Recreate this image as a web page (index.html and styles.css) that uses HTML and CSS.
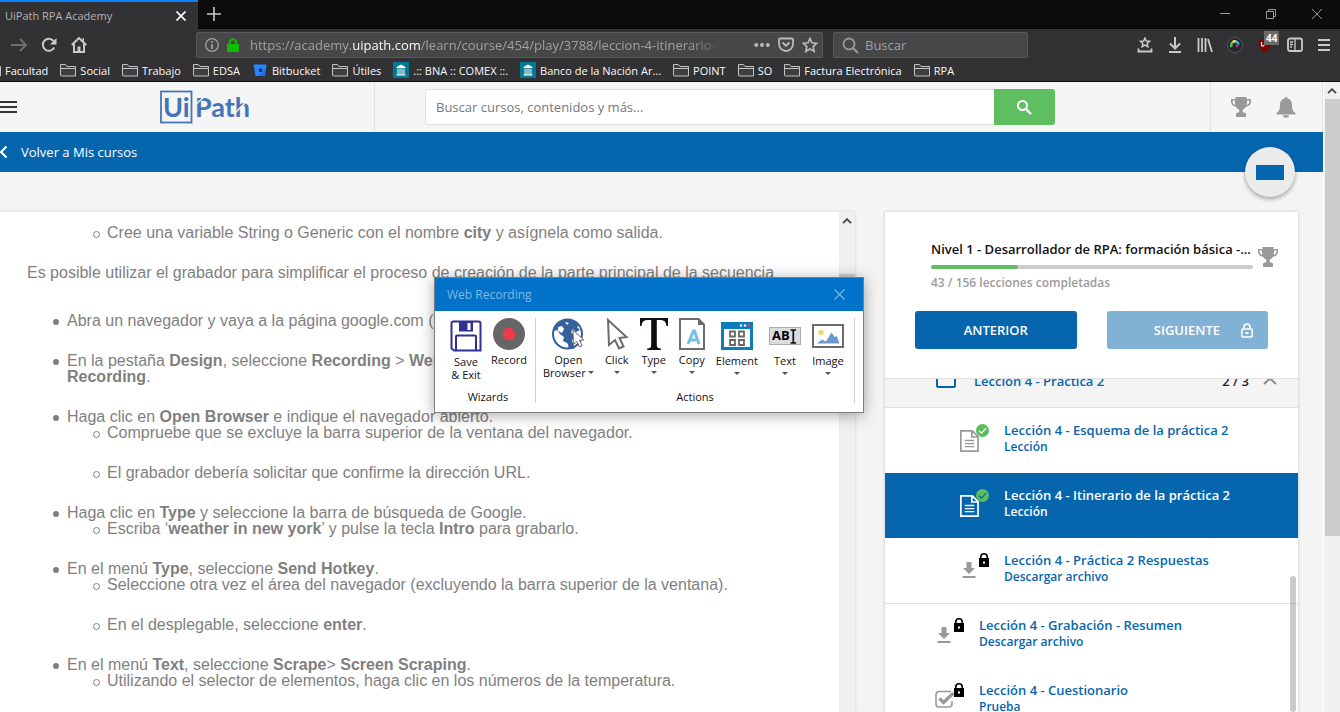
FILE: index.html
```html
<!DOCTYPE html>
<html lang="es">
<head>
<meta charset="utf-8">
<title>UiPath RPA Academy</title>
<link rel="stylesheet" href="styles.css">
</head>
<body>
<svg class="defs" aria-hidden="true">
  <symbol id="folder" viewBox="0 0 16 16"><path d="M.5 13V2.5h5l1.500 2h8.500V14H1.500a1 1 0 0 1-1-1z" fill="#3f3f41" stroke="#c3c3c4"/><path d="M.5 6.500h15" stroke="#c3c3c4"/></symbol>
  <symbol id="bank" viewBox="0 0 16 16"><path fill="#037893" d="M0 0h16v16H0z"/><path fill="#fff" d="M8 2.500 3.500 5v1h9V5zM4.500 6.500h1V11h-1zM6.500 6.500h1V11h-1zM8.500 6.500h1V11h-1zM10.500 6.500h1V11h-1zM4 11.500h8v.7H4zM3.500 12.600h9v.9h-9z"/></symbol>
  <symbol id="trophy" viewBox="0 0 22 20"><path fill="#999" d="M5.500 0h11v2H21v2.500c0 3-2.300 5-5 5.300-.8 1.500-2 2.400-3.200 2.800v2.600c2.200.3 3.200 1 3.200 2V20H6v-2.800c0-1 1-1.700 3.200-2v-2.600C8 12.200 6.800 11.300 6 9.800 3.300 9.500 1 7.500 1 4.500V2h4.500zM2.600 3.500v1c0 1.700 1 3 2.700 3.500-.3-1.200-.4-2.800-.4-4.500zm14.500 0c0 1.700-.1 3.300-.4 4.500 1.700-.5 2.700-1.800 2.700-3.500v-1z"/></symbol>
  <symbol id="doc" viewBox="0 0 20 23"><path fill="none" stroke="currentColor" stroke-width="1.800" d="M.9.9H13l6 6v15.200H.9zM12.500.8v6.500H19"/><path stroke="currentColor" stroke-width="1.400" d="M5 11h10M5 14.200h10M5 17.400h10"/></symbol>
  <symbol id="check" viewBox="0 0 12 12"><circle cx="6" cy="6" r="6" fill="#5cbd5f"/><path d="m2.800 6.200 2.300 2.200 4.200-4.600" fill="none" stroke="currentColor" stroke-width="1.200"/></symbol>
  <symbol id="lock" viewBox="0 0 12 14"><path d="M1 5h1V4a4 4 0 0 1 8 0v1h1v9H1zM3.600 5h4.800V4a2.400 2.400 0 0 0-4.800 0z" fill="#000" fill-rule="evenodd"/><path d="M5 8.500h2v2H5z" fill="#fff"/></symbol>
  <symbol id="down" viewBox="0 0 14 16"><path fill="#999" d="M4.500 0h5v6H13l-6 6-6-6h3.500zM.5 14h13v2H.5z"/></symbol>
  <symbol id="quiz" viewBox="0 0 20 18"><path d="M16 1.500H4A3 3 0 0 0 1 4.500V14a3 3 0 0 0 3 3h10a3 3 0 0 0 3-3v-3" fill="none" stroke="#999" stroke-width="1.600"/><path d="m4.500 8.500 4 4L18.500 3" fill="none" stroke="#999" stroke-width="3.400"/></symbol>
  <symbol id="up" viewBox="0 0 10 6"><path d="M1 5.200 5 1.200l4 4" fill="none" stroke="#444" stroke-width="1.800"/></symbol>
</svg>

<header class="chrome">
  <div class="titlebar">
    <div class="tab"><span>UiPath RPA Academy</span>
      <button class="plain" aria-label="Cerrar pestaña"><svg width="10" height="10"><path d="m.5.5 9 9m0-9-9 9" stroke="#f4f4f4" stroke-width="1.800"/></svg></button>
    </div>
    <button class="plain newtab" aria-label="Nueva pestaña"><svg width="14" height="14"><path d="M7 0v14M0 7h14" stroke="#c8c8c8" stroke-width="1.600"/></svg></button>
    <div class="winbtns">
      <button class="plain" aria-label="Minimizar"><svg width="10" height="10"><path d="M0 4.500h10" stroke="#999"/></svg></button>
      <button class="plain" aria-label="Restaurar"><svg width="10" height="10"><path d="M.5 2.500h7v7h-7zM2.500 2V.5h7v7H8" fill="none" stroke="#999"/></svg></button>
      <button class="plain" aria-label="Cerrar"><svg width="10" height="10"><path d="m0 0 10 10m0-10L0 10" stroke="#999"/></svg></button>
    </div>
  </div>
  <div class="toolbar">
    <div class="navbtns">
      <button class="plain" aria-label="Adelante"><svg width="16" height="16"><path d="M0 8h15M9 2l6 6-6 6" fill="none" stroke="#707072" stroke-width="1.800"/></svg></button>
      <button class="plain" aria-label="Recargar"><svg width="16" height="16"><path d="M13.200 10.500A6 6 0 1 1 12.500 4" fill="none" stroke="#c9c9ca" stroke-width="2"/><path d="M15.500 1v6.500H9z" fill="#c9c9ca"/></svg></button>
      <button class="plain" aria-label="Inicio"><svg width="16" height="16"><path d="M.8 8 8 1l7.200 7M3 7v8h10V7" fill="none" stroke="#c9c9ca" stroke-width="2"/><path d="M6.500 9.500h3V15h-3zM11.500 1H13v4h-1.500z" fill="#c9c9ca"/></svg></button>
    </div>
    <div class="urlbar">
      <svg width="14" height="14"><circle cx="7" cy="7" r="6.300" fill="none" stroke="#a5a5a6" stroke-width="1.200"/><path d="M6.200 6h1.600v5H6.200zM6.200 3h1.600v1.700H6.200z" fill="#a5a5a6"/></svg>
      <svg width="12" height="14"><path d="M2.800 7V4.500a3.200 3.200 0 0 1 6.400 0V7" fill="none" stroke="#12bc00" stroke-width="2"/><rect y="6" width="12" height="8" rx="1" fill="#12bc00"/></svg>
      <div class="url">https://academy.<b>uipath.com</b>/learn/course/454/play/3788/leccion-4-itinerario-de</div>
      <button class="plain" aria-label="Acciones"><svg width="16" height="16"><g fill="#b9b9ba"><circle cx="2.200" cy="8" r="2"/><circle cx="8" cy="8" r="2"/><circle cx="13.800" cy="8" r="2"/></g></svg></button>
      <button class="plain" aria-label="Pocket"><svg width="16" height="16"><path d="M2 1.500h12a1 1 0 0 1 1 1V7A7 7 0 0 1 1 7V2.500a1 1 0 0 1 1-1z" fill="none" stroke="#b9b9ba" stroke-width="1.800"/><path d="m4.500 5.500 3.500 3.300 3.500-3.300" fill="none" stroke="#b9b9ba" stroke-width="2"/></svg></button>
      <button class="plain" aria-label="Marcador"><svg width="16" height="16"><path d="m8 1.500 2 4.300 4.700.6-3.500 3.200.9 4.700L8 12l-4.100 2.300.9-4.700L1.300 6.400 6 5.800z" fill="none" stroke="#b9b9ba" stroke-width="1.700"/></svg></button>
    </div>
    <label class="websearch">
      <svg width="17" height="17"><circle cx="7" cy="7" r="5.500" fill="none" stroke="#98989a" stroke-width="1.800"/><path d="m11 11 5 5" stroke="#98989a" stroke-width="2.200"/></svg>
      <input type="text" placeholder="Buscar" aria-label="Buscar">
    </label>
    <div class="tools">
      <button class="plain" aria-label="Marcadores"><svg width="16" height="16"><path d="m8 1 1.300 3 3.200.3-2.400 2.200.7 3.200L8 8.100 5.200 9.700l.7-3.200-2.400-2.200L6.700 4z" fill="none" stroke="#c9c9ca" stroke-width="1.500"/><path d="M1.500 11.500v3h13v-3" fill="none" stroke="#c9c9ca" stroke-width="1.800"/></svg></button>
      <button class="plain" aria-label="Descargas"><svg width="16" height="16"><path d="M8 0v11M3 6.500l5 5 5-5M2 15h12" fill="none" stroke="#c9c9ca" stroke-width="2"/></svg></button>
      <button class="plain" aria-label="Biblioteca"><svg width="16" height="16"><path d="M1.500 1v14M5 1v14M8.500 1v14M11 2l4 13" fill="none" stroke="#c9c9ca" stroke-width="1.800"/></svg></button>
      <button class="plain" aria-label="Cámara"><svg width="16" height="16"><circle cx="8" cy="8" r="7.500" fill="#26272c" stroke="#55575e"/><path d="M4.800 10A3.600 3.600 0 0 1 5.500 5.300" fill="none" stroke="#3fd43f" stroke-width="2.400"/><path d="M5.500 5.300A3.600 3.600 0 0 1 9 4.500" fill="none" stroke="#f2e23a" stroke-width="2.400"/><path d="M9 4.500A3.600 3.600 0 0 1 11.500 7.500" fill="none" stroke="#36b6ee" stroke-width="2.400"/><path d="m9 9.500 2.300-1.500" stroke="#e02e8a" stroke-width="2"/></svg></button>
      <button class="plain ublock" aria-label="uBlock"><svg width="16" height="16"><path d="M8 1c2 1.300 4 2 6.500 2 0 6-1 9.500-6.500 12.500C2.500 12.500 1.500 9 1.500 3 4 3 6 2.300 8 1z" fill="#800000"/><path d="M4.500 5v3c0 1.500 2.500 1.500 2.500 0" fill="none" stroke="#fff" stroke-width="1.200"/></svg><span class="badge">44</span></button>
      <button class="plain" aria-label="Barra lateral"><svg width="16" height="16"><rect x="1" y="1.500" width="14" height="12.500" rx="2" fill="none" stroke="#c9c9ca" stroke-width="1.800"/><path d="M8 1.500V14M3 5h3M3 7.500h3M3 10h2" stroke="#c9c9ca" stroke-width="1.300"/></svg></button>
      <button class="plain" aria-label="Menú"><svg width="14" height="16"><path d="M1 3h12M1 8h12M1 13h12" stroke="#c9c9ca" stroke-width="1.800"/></svg></button>
    </div>
  </div>
  <nav class="bookmarks">
    <a href="#"><svg><use href="#folder"/></svg>Facultad</a>
    <a href="#"><svg><use href="#folder"/></svg>Social</a>
    <a href="#"><svg><use href="#folder"/></svg>Trabajo</a>
    <a href="#"><svg><use href="#folder"/></svg>EDSA</a>
    <a href="#"><svg viewBox="0 0 16 16"><path d="M1.500 2.500h13L13 14H3.500z" fill="#2684ff"/><path d="M10.500 6.500h-4l.7 3.500h2.800z" fill="#103a78"/><path d="m10 10 3.800-3L13 14H6z" fill="#1763d8" opacity=".6"/></svg>Bitbucket</a>
    <a href="#"><svg><use href="#folder"/></svg>Útiles</a>
    <a href="#"><svg><use href="#bank"/></svg>.:: BNA :: COMEX ::.</a>
    <a href="#"><svg><use href="#bank"/></svg>Banco de la Nación Ar...</a>
    <a href="#"><svg><use href="#folder"/></svg>POINT</a>
    <a href="#"><svg><use href="#folder"/></svg>SO</a>
    <a href="#"><svg><use href="#folder"/></svg>Factura Electrónica</a>
    <a href="#"><svg><use href="#folder"/></svg>RPA</a>
  </nav>
</header>

<div class="viewport">
  <div class="page">
    <header class="sitebar">
      <div class="brand">
        <button class="plain" aria-label="Menú"><svg width="17" height="14"><path d="M0 2h17M0 7h17M0 12h17" stroke="#333" stroke-width="2"/></svg></button>
        <svg class="logo" width="92" height="34" role="img" aria-label="UiPath">
          <rect x="1" y="1.500" width="30.500" height="31" fill="none" stroke="#4674b9" stroke-width="1.800"/>
          <text x="3" y="27">Ui</text><text x="35" y="27">Path</text>
          <path d="m34 16 11-10M76 22l9-9" stroke="#f5f5f5" stroke-width="1.500"/>
        </svg>
      </div>
      <form class="search">
        <input type="text" placeholder="Buscar cursos, contenidos y más..." aria-label="Buscar cursos">
        <button type="button" aria-label="Buscar"><svg width="17" height="17"><circle cx="6.500" cy="6.500" r="4.500" fill="none" stroke="#fff" stroke-width="2"/><path d="m10 10 5 5" stroke="#fff" stroke-width="2.400"/></svg></button>
      </form>
      <div class="account">
        <button class="plain" aria-label="Logros"><svg width="22" height="20"><use href="#trophy"/></svg></button>
        <button class="plain" aria-label="Avisos"><svg width="20" height="21"><path d="M10 0c1 0 1.500.6 1.500 1.500C15 2.500 16 5 16 8c0 4.500 1.200 6.500 3.500 8v1.500H.5V16C2.800 14.500 4 12.500 4 8c0-3 1-5.500 4.500-6.500C8.500.6 9 0 10 0zM7 18.300h6a3 2.500 0 0 1-6 0z" fill="#999"/></svg></button>
      </div>
    </header>
    <nav class="backbar">
      <a href="#"><svg width="8" height="14"><path d="M6.500 1.500 1 7l5.500 5.500" fill="none" stroke="#fff" stroke-width="2.200"/></svg>Volver a Mis cursos</a>
      <button class="bubble" aria-label="Panel"><span></span></button>
    </nav>
    <div class="columns">
      <main class="lesson">
        <article>
          <ul><li class="bare"><ul><li>Cree una variable String o Generic con el nombre <b>city</b> y asígnela como salida.</li></ul></li></ul>
          <p>Es posible utilizar el grabador para simplificar el proceso de creación de la parte principal de la secuencia</p>
          <ul>
            <li>Abra un navegador y vaya a la página google.com (</li>
            <li>En la pestaña <b>Design</b>, seleccione <b>Recording</b> &gt; <b>Web<br>Recording</b>.</li>
            <li>Haga clic en <b>Open Browser</b> e indique el navegador abierto.
              <ul><li>Compruebe que se excluye la barra superior de la ventana del navegador.</li><li>El grabador debería solicitar que confirme la dirección URL.</li></ul></li>
            <li>Haga clic en <b>Type</b> y seleccione la barra de búsqueda de Google.
              <ul><li>Escriba ‘<b>weather in new york</b>’ y pulse la tecla <b>Intro</b> para grabarlo.</li></ul></li>
            <li>En el menú <b>Type</b>, seleccione <b>Send Hotkey</b>.
              <ul><li>Seleccione otra vez el área del navegador (excluyendo la barra superior de la ventana).</li><li>En el desplegable, seleccione <b>enter</b>.</li></ul></li>
            <li>En el menú <b>Text</b>, seleccione <b>Scrape</b>&gt; <b>Screen Scraping</b>.
              <ul><li>Utilizando el selector de elementos, haga clic en los números de la temperatura.</li></ul></li>
          </ul>
        </article>
        <div class="scroll inner"><svg width="10" height="6"><use href="#up"/></svg><span></span></div>
      </main>
      <aside class="course">
        <section class="summary">
          <div class="progress">
            <div class="info">
              <h2>Nivel 1 - Desarrollador de RPA: formación básica -...</h2>
              <div class="bar"><div style="width:27%"></div></div>
              <small>43 / 156 lecciones completadas</small>
            </div>
            <svg width="22" height="20"><use href="#trophy"/></svg>
          </div>
          <div class="steps">
            <button>ANTERIOR</button>
            <button class="off">SIGUIENTE<svg width="12" height="15"><path d="M3 6V4a3 3 0 0 1 6 0v2" fill="none" stroke="#fff" stroke-width="1.600"/><rect x=".8" y="6" width="10.400" height="8" rx="1" fill="none" stroke="#fff" stroke-width="1.600"/><path d="M4.500 9h3v2h-3z" fill="#fff"/></svg></button>
          </div>
        </section>
        <div class="list">
          <div class="group">
            <svg width="20" height="14"><rect x="1" y="1" width="18" height="12" rx="1" fill="none" stroke="#0566ae" stroke-width="2"/></svg>
            <b>Lección 4 - Práctica 2</b><span>2 / 3</span>
            <svg width="14" height="8"><path d="m1 7 6-5.500L13 7" fill="none" stroke="#8a8a8a" stroke-width="2"/></svg>
          </div>
          <a class="item sub" href="#"><span class="kind"><svg width="19" height="22"><use href="#doc"/></svg><svg class="mark" width="13" height="13"><use href="#check"/></svg></span><span><b>Lección 4 - Esquema de la práctica 2</b><small>Lección</small></span></a>
          <a class="item sub current" href="#"><span class="kind"><svg width="19" height="22"><use href="#doc"/></svg><svg class="mark" width="13" height="13"><use href="#check"/></svg></span><span><b>Lección 4 - Itinerario de la práctica 2</b><small>Lección</small></span></a>
          <a class="item sub" href="#"><span class="kind"><svg width="14" height="16"><use href="#down"/></svg><svg class="mark" width="12" height="14"><use href="#lock"/></svg></span><span><b>Lección 4 - Práctica 2 Respuestas</b><small>Descargar archivo</small></span></a>
          <a class="item top" href="#"><span class="kind"><svg width="14" height="16"><use href="#down"/></svg><svg class="mark" width="12" height="14"><use href="#lock"/></svg></span><span><b>Lección 4 - Grabación - Resumen</b><small>Descargar archivo</small></span></a>
          <a class="item" href="#"><span class="kind"><svg width="20" height="18"><use href="#quiz"/></svg><svg class="mark" width="12" height="14"><use href="#lock"/></svg></span><span><b>Lección 4 - Cuestionario</b><small>Prueba</small></span></a>
          <div class="thumb"></div>
        </div>
      </aside>
    </div>
  </div>
  <div class="scroll outer"><svg width="10" height="6"><use href="#up"/></svg><span></span></div>
</div>

<section class="dialog" role="dialog" aria-label="Web Recording">
  <div class="caption"><span>Web Recording</span><button class="plain" aria-label="Cerrar"><svg width="11" height="11"><path d="m.5.5 10 10m0-10-10 10" stroke="#7fb9e3" stroke-width="1.100"/></svg></button></div>
  <div class="ribbon">
    <div class="block wizards">
      <div class="cmds">
        <button class="plain low"><svg width="32" height="32"><path d="M1.500 4A2 2 0 0 1 3.500 1.500H28.500A2 2 0 0 1 30.500 3.500V30.500H4L1.500 28.500zM6 30V16.500a1 1 0 0 1 1-1h18a1 1 0 0 1 1 1V30" fill="none" stroke="#2e3192" stroke-width="2"/><path d="M9 1h14v10.500H9z" fill="#2e3192"/><path d="M17.500 3h3v7h-3z" fill="#fff"/></svg>Save<br>&amp; Exit</button>
        <button class="plain"><svg width="32" height="32"><circle cx="16" cy="16" r="16" fill="#666"/><circle cx="16" cy="16" r="6.200" fill="#f03a52"/></svg>Record</button>
      </div>
      <div class="name">Wizards</div>
    </div>
    <div class="block actions">
      <div class="cmds">
        <button class="plain"><svg width="32" height="32"><circle cx="15.500" cy="16" r="14.500" fill="#fff" stroke="#365f9e" stroke-width="2"/><path d="M3 9C6 4 11 1 17 1.500c4 .3 8 2 10.500 5.500L25 9l3 3-4 2-3-3-2 3 3 4-2 5 3 7c-2 1-5 1.300-7 1 1-3 0-5-1-6l-4-2 1-4-4-3-3-4-3 1z" fill="#365f9e"/><path d="m6 9 4-1 2 3-2 4-4-2zM13 4l4 1-2 2z" fill="#fff"/><path d="m21 12 .4 14.500 3.400-3 2.800 5.500 2.600-1.300-2.700-5.400 4.400-.3z" fill="#fff" stroke="#666"/></svg>Open<br><span>Browser<i></i></span></button>
        <button class="plain"><svg width="24" height="32"><path d="m3 2 1 25 6-5 4 8.500 4.500-2L14.500 20l7-1z" fill="#fff" stroke="#6c6c6c" stroke-width="2"/></svg>Click<i></i></button>
        <button class="plain"><svg width="28" height="32"><path d="M0 0h28v8h-1.500C26 3.500 24 2 19.500 2h-2.700v25c0 2.500 1 3.400 4 3.500V32H7.200v-1.500c3-.1 4-1 4-3.500V2H8.500C4 2 2 3.500 1.500 8H0z" fill="#0a0f0f"/></svg>Type<i></i></button>
        <button class="plain"><svg width="26" height="32"><path d="M1 1h18.500L25 6.500V31H1z" fill="#fff" stroke="#6c6c6c" stroke-width="2"/><path d="M19 0v7h7z" fill="#6c6c6c"/><path d="m9 26 5.500-13h1L20 26M10.500 22h8" fill="none" stroke="#79bfe6" stroke-width="3"/></svg>Copy<i></i></button>
        <button class="plain low"><svg width="32" height="28"><path d="M0 0h32v28H0z" fill="#0a7dbd"/><path d="M3 7h26v18H3z" fill="#fff"/><path d="M9 9.500h5v5H9zM18 9.500h5v5h-5zM9 18h5v5H9zM18 18h5v5h-5z" fill="#fff" stroke="#666" stroke-width="1.800"/><g fill="#fff"><circle cx="20" cy="3.500" r="1.200"/><circle cx="24" cy="3.500" r="1.200"/></g><circle cx="28" cy="3.500" r="1.400" fill="#f03a52"/></svg>Element<i></i></button>
        <button class="plain low"><svg width="32" height="28"><rect x=".5" y="5.500" width="31" height="17" fill="#dcdcdc" stroke="#aaa"/><text x="3" y="18" class="abi">AB</text><path d="M21.500 8h2l.8 1 .8-1h2M24.300 9v11M21.500 21h2l.8-1 .8 1h2" fill="none" stroke="#111" stroke-width="1.700"/></svg>Text<i></i></button>
        <button class="plain low"><svg width="32" height="28"><path d="M1 3h30v22H1z" fill="#fff" stroke="#6c6c6c" stroke-width="2"/><circle cx="9" cy="10.500" r="2.700" fill="#efd775"/><path d="m5 21.500 5-4 4 2 5.500-9 3.500 5 1.500-2L27.500 21.500z" fill="#6c97cf"/></svg>Image<i></i></button>
      </div>
      <div class="name">Actions</div>
    </div>
  </div>
</section>
</body>
</html>
```
FILE: styles.css
```css
*, *::before { box-sizing: border-box; }
body {
  margin: 0;
  height: 100vh;
  overflow: hidden;
  display: flex;
  flex-direction: column;
  font-family: "Open Sans", "Noto Sans", sans-serif;
  font-size: 13px;
  background: #f4f4f4;
}
button, input { font: inherit; color: inherit; }
a { color: inherit; text-decoration: none; }
svg { flex: none; display: block; }
.defs { position: absolute; width: 0; height: 0; }
.plain { border: 0; padding: 0; background: none; display: flex; align-items: center; }

/* Browser frame */
.chrome { flex: none; background: #323234; color: #f9f9fa; border-bottom: 1px solid #0c0c0d; }
.titlebar { height: 29px; display: flex; background: #0c0c0c; border-bottom: 1px solid #000; }
.tab {
  width: 198px;
  height: 29px;
  padding: 0 12px 0 5px;
  display: flex;
  align-items: center;
  justify-content: space-between;
  background: #323234;
  border-top: 2px solid #0a84ff;
  font-size: 11px;
  color: #b4b4b5;
}
.newtab { margin-left: 9px; }
.winbtns { margin-left: auto; display: flex; gap: 36px; padding-right: 18px; }
.toolbar { height: 32px; display: flex; align-items: center; padding-right: 9px; }
.navbtns { width: 196px; padding-left: 11px; display: flex; gap: 14px; }
.urlbar {
  flex: 1;
  max-width: 627px;
  height: 26px;
  padding: 0 4px 0 8px;
  display: flex;
  align-items: center;
  gap: 8px;
  background: #474749;
  border: 1px solid #59595b;
  border-radius: 2px;
}
.url {
  flex: 1;
  margin-left: 3px;
  margin-right: 24px;
  overflow: hidden;
  white-space: nowrap;
  color: #a0a0a1;
  mask-image: linear-gradient(to right, #000 93%, transparent);
}
.url b { font-weight: 400; color: #f9f9fa; }
.websearch {
  width: 195px;
  height: 26px;
  margin-left: 10px;
  padding-left: 8px;
  display: flex;
  align-items: center;
  gap: 4px;
  background: #474749;
  border: 1px solid #59595b;
  border-radius: 2px;
}
.websearch input { width: 100%; border: 0; background: none; }
.websearch input::placeholder { color: #a0a0a1; }
.tools { margin-left: auto; display: flex; gap: 14px; }
.ublock { position: relative; }
.badge {
  position: absolute;
  left: 7px;
  top: -6px;
  padding: 0 2px;
  background: #6b6b6d;
  color: #fff;
  font-size: 10px;
  font-weight: 700;
  line-height: 14px;
}
.bookmarks { height: 20px; display: flex; align-items: center; gap: 12px; padding-bottom: 2px; font-size: 11px; white-space: nowrap; }
.bookmarks a { display: flex; align-items: center; gap: 4px; }
.bookmarks a:first-child { margin-left: -15px; }
.bookmarks svg { width: 16px; height: 16px; }

/* Web page */
.viewport { flex: 1; min-height: 0; display: flex; }
.page { flex: 1; min-width: 0; display: flex; flex-direction: column; }
.sitebar { flex: none; height: 50px; display: flex; align-items: center; background: #f5f5f5; border-right: 1px solid #e2e2e2; }
.brand { width: 375px; height: 100%; display: flex; align-items: center; gap: 143px; border-right: 1px solid #e2e2e2; }
.logo text { font: 700 27px Lato, sans-serif; fill: #4674b9; }
.search { flex: 1; max-width: 630px; margin-left: 50px; height: 36px; display: flex; }
.search input { flex: 1; min-width: 0; padding: 0 10px; border: 1px solid #e2e2e2; border-right: 0; border-radius: 3px 0 0 3px; background: #fff; }
.search input::placeholder { color: #777; }
.search button { width: 61px; padding: 0 0 0 22px; border: 0; border-radius: 0 3px 3px 0; background: #5fbe5f; }
.account { margin-left: auto; width: 112px; height: 100%; padding-left: 19px; display: flex; align-items: center; gap: 24px; border-left: 1px solid #e2e2e2; }
.backbar { flex: none; height: 40px; position: relative; display: flex; align-items: center; background: #0566ae; color: #fff; }
.backbar a { display: flex; align-items: center; gap: 13px; }
.bubble {
  position: absolute;
  right: 28px;
  top: 15px;
  width: 50px;
  height: 50px;
  border: 0;
  border-radius: 50%;
  padding: 0;
  background: #ebebeb;
  box-shadow: 0 2px 4px rgba(0, 0, 0, .35);
}
.bubble span { display: block; width: 28px; height: 15px; margin: 1px auto 0; background: #0566ae; }
.columns { flex: 1; min-height: 0; display: flex; gap: 30px; padding: 40px 25px 0 0; }
.lesson { flex: 1; min-width: 0; display: flex; background: #fff; box-shadow: 0 0 3px rgba(0, 0, 0, .16); overflow: hidden; }
article { flex: 1; padding: 13px 20px 0 27px; font: 16px/16px "Liberation Sans", Arial, sans-serif; color: #7f7f7f; }
article ul { margin: 0; padding-left: 40px; list-style: none; }
article li { position: relative; margin-bottom: 24px; }
article li::before {
  content: "";
  position: absolute;
  left: -14px;
  top: 6px;
  width: 6px;
  height: 6px;
  border-radius: 50%;
  background: #7f7f7f;
}
article li li::before { width: 7px; height: 7px; border: 1px solid #7f7f7f; background: none; }
article .bare::before { content: none; }
article p { margin: 0 0 32px; white-space: nowrap; }
.scroll { flex: none; display: flex; flex-direction: column; align-items: center; background: #f0f0f0; }
.scroll svg { margin: 6px 0 5px; }
.scroll span { background: #cdcdcd; }
.inner { width: 16px; }
.inner span { width: 16px; height: 60px; margin-top: 45px; }
.outer { width: 17px; border-left: 1px solid #fff; }
.outer span { width: 15px; height: 437px; }

/* Course panel */
.course { flex: none; width: 413px; display: flex; flex-direction: column; background: #fff; box-shadow: 0 0 3px rgba(0, 0, 0, .2); }
.summary { flex: none; padding: 27px 30px 29px; border-bottom: 1px solid #e2e2e2; }
.progress { display: flex; align-items: flex-start; gap: 4px; margin: 0 -11px 0 16px; }
.progress svg { margin-top: 8px; }
.info { flex: 1; min-width: 0; }
.progress h2 { margin: 0; font-size: 13px; font-weight: 600; line-height: 20px; color: #111; white-space: nowrap; }
.bar { height: 4px; margin: 6px 0 5px; border-radius: 2px; background: #ccc; overflow: hidden; }
.bar div { height: 4px; border-radius: 2px; background: #5fbe5f; }
.progress small { display: block; font-size: 12px; font-weight: 600; line-height: 17px; color: #9b9b9b; }
.steps { display: grid; grid-template-columns: 1fr 1fr; gap: 30px; margin-top: 20px; }
.steps button { height: 38px; border: 0; border-radius: 3px; background: #0566ae; color: #fff; font-weight: 600; }
.steps .off { display: flex; align-items: center; justify-content: flex-end; gap: 21px; padding-right: 15px; background: #82b1d6; }
.list { flex: 1; min-height: 0; position: relative; overflow: hidden; color: #0566ae; }
.list b { display: block; font-weight: 600; line-height: 18px; }
.list small { display: block; margin-top: 1px; font-size: 12px; font-weight: 600; line-height: 14px; }
.group { height: 50px; margin-top: -21px; padding: 0 21px 4px 51px; display: flex; align-items: center; background: #f4f4f4; border-bottom: 1px solid #e2e2e2; }
.group b { flex: 1; margin-left: 18px; }
.group span { margin-right: 14px; font-weight: 600; color: #222; }
.item { display: flex; height: 65px; padding: 13px 0 0 49px; }
.item.sub { padding-left: 74px; }
.item.top { border-top: 1px solid #e2e2e2; padding-top: 12px; }
.current { background: #0566ae; color: #fff; }
.kind { position: relative; width: 45px; color: #999; }
.kind > svg:first-child { margin: 9px 0 0 1px; }
.current .kind { color: #fff; }
.kind svg[width="14"]:first-child { margin: 11px 0 0 3px; }
.kind .mark { position: absolute; left: 17px; top: 3px; color: #fff; }
.kind .mark[width="12"] { left: 19px; top: 2px; }
.current .kind .mark { color: #0566ae; }
.thumb { position: absolute; right: 2px; top: 197px; bottom: 0; width: 6px; border-radius: 3px; background: rgba(150, 150, 150, .5); }

/* Recorder window */
.dialog { position: absolute; left: 434px; top: 277px; width: 430px; height: 136px; background: #fff; border: 1px solid #7d7d7d; box-shadow: 0 2px 14px rgba(0, 0, 0, .35); font-size: 11px; line-height: 13px; color: #111; }
.caption { height: 33px; padding: 0 18px 0 12px; display: flex; align-items: center; justify-content: space-between; background: #0072c9; color: #7fb9e3; font-size: 12px; }
.ribbon { display: flex; padding: 7px 8px 0 0; }
.block { height: 85px; display: flex; flex-direction: column; justify-content: space-between; border-right: 1px solid #d0d0d0; }
.wizards { width: 101px; padding-left: 6px; }
.wizards .cmds { padding: 0 8px 0 9px; }
.actions { flex: 1; }
.cmds { display: flex; justify-content: space-between; padding: 0 10px 0 7px; }
.cmds button { flex-direction: column; line-height: 13px; }
.cmds svg { margin-bottom: 3px; }
.cmds .low svg { margin-top: 2px; margin-bottom: 3px; }
.cmds .low svg[height="28"] { margin-top: 4px; margin-bottom: 4px; }
.cmds i { display: block; width: 0; margin: 5px auto 0; border: 3px solid transparent; border-top-color: #555; border-bottom: 0; }
.cmds span { display: flex; align-items: center; gap: 2px; }
.cmds span i { margin: 0; }
.name { text-align: center; }
.abi { font: 700 13px "Open Sans", sans-serif; }
```
